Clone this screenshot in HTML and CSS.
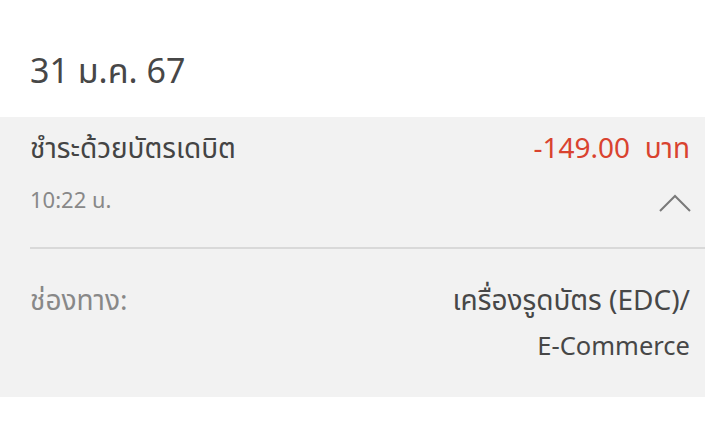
FILE: index.html
```html
<!DOCTYPE html>
<html lang="th">
<head>
  <meta charset="UTF-8">
  <meta name="viewport" content="width=device-width, initial-scale=1.0">
  <title>รายการ</title>
  <link rel="stylesheet" href="styles.css">
</head>
<body>
  <h2 class="date">31 ม.ค. 67</h2>

  <div class="item">
    <div class="item-head">
      <div class="item-info">
        <div class="item-title">ชำระด้วยบัตรเดบิต</div>
        <div class="item-time">10:22 น.</div>
      </div>
      <div class="item-side">
        <div class="amount">-149.00&nbsp; บาท</div>
        <svg class="chevron" width="32" height="18" viewBox="0 0 32 18">
          <polyline points="1,17 16,2 31,17" fill="none" stroke="#7a7a7a" stroke-width="2"/>
        </svg>
      </div>
    </div>

    <div class="item-detail">
      <div class="detail-label">ช่องทาง:</div>
      <div class="detail-value">เครื่องรูดบัตร (EDC)/<br><span class="latin">E-Commerce</span></div>
    </div>
  </div>
</body>
</html>
```

FILE: styles.css
```css
body {
  margin: 0;
  background: #fff;
  font-family: "Noto Sans", "Noto Sans Thai", "DejaVu Sans", sans-serif;
  color: #444;
}

.date {
  margin: 0;
  padding: 50px 30px 0;
  height: 117px;
  box-sizing: border-box;
  font-size: 34px;
  font-weight: normal;
  line-height: 40px;
  color: #474747;
}

.item {
  background: #f2f2f2;
  padding-left: 30px;
  height: 280px;
  box-sizing: border-box;
}

.item-head {
  display: flex;
  justify-content: space-between;
  padding: 10px 15px 0 0;
  height: 132px;
  box-sizing: border-box;
  border-bottom: 2px solid #d9d9d9;
}

.item-title {
  font-size: 28px;
  line-height: 40px;
  color: #444;
}

.item-time {
  margin-top: 18px;
  font-size: 22px;
  line-height: 28px;
  color: #888;
}

.item-side {
  display: flex;
  flex-direction: column;
  align-items: flex-end;
}

.amount {
  font-size: 28px;
  line-height: 40px;
  color: #d9432f;
}

.chevron {
  margin-top: 27px;
  margin-right: -1px;
}

.item-detail {
  display: flex;
  justify-content: space-between;
  padding: 28px 15px 0 0;
}

.detail-label {
  font-size: 28px;
  line-height: 45px;
  color: #888;
}

.detail-value {
  font-size: 28px;
  line-height: 45px;
  text-align: right;
  color: #474747;
}

.detail-value .latin {
  font-size: 25.5px;
}
```
